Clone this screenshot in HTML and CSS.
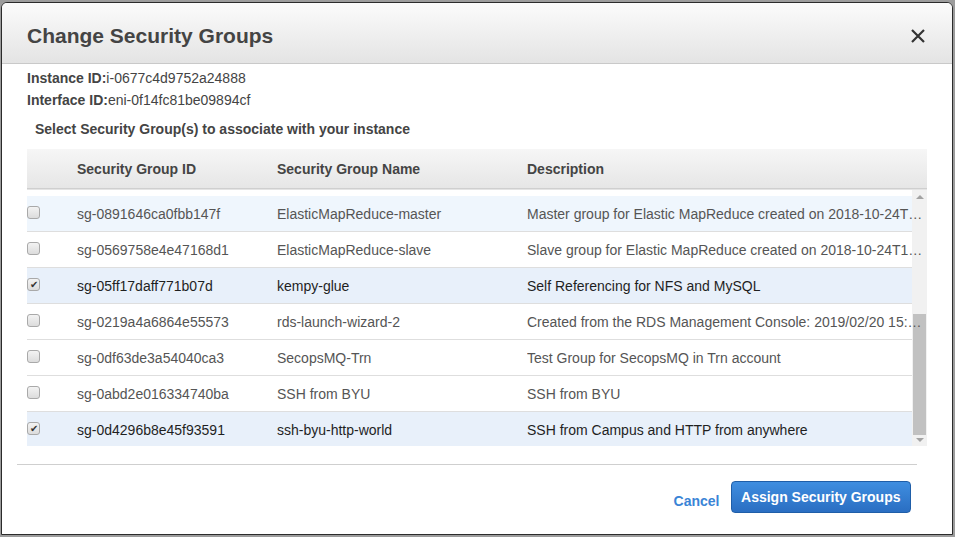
FILE: index.html
```html
<!DOCTYPE html>
<html lang="en">
<head>
<meta charset="utf-8">
<title>Change Security Groups</title>
<link rel="stylesheet" href="styles.css">
</head>
<body>
<div class="dialog">
  <div class="dlg-head">
    <h1 class="dlg-title">Change Security Groups</h1>
    <button class="close" aria-label="Close">
      <svg width="14" height="14" viewBox="0 0 14 14"><path d="M1 1 L13 13 M13 1 L1 13" stroke="#333" stroke-width="2.2" fill="none"/></svg>
    </button>
  </div>
  <div class="dlg-body">
    <div class="meta"><b>Instance ID:</b>i-0677c4d9752a24888</div>
    <div class="meta"><b>Interface ID:</b>eni-0f14fc81be09894cf</div>
    <div class="prompt">Select Security Group(s) to associate with your instance</div>
    <div class="grid">
      <div class="thead">
        <div></div>
        <div>Security Group ID</div>
        <div>Security Group Name</div>
        <div>Description</div>
      </div>
      <div class="tbody">
        <div class="row hover"><div><span class="cb"></span></div><div class="c">sg-0891646ca0fbb147f</div><div class="c">ElasticMapReduce-master</div><div class="c desc">Master group for Elastic MapReduce created on 2018-10-24T17:05:31.000Z</div></div>
        <div class="row"><div><span class="cb"></span></div><div class="c">sg-0569758e4e47168d1</div><div class="c">ElasticMapReduce-slave</div><div class="c desc">Slave group for Elastic MapReduce created on 2018-10-24T17:05:31.000Z</div></div>
        <div class="row sel"><div><span class="cb on">&#10004;</span></div><div class="c">sg-05ff17daff771b07d</div><div class="c">kempy-glue</div><div class="c desc">Self Referencing for NFS and MySQL</div></div>
        <div class="row"><div><span class="cb"></span></div><div class="c">sg-0219a4a6864e55573</div><div class="c">rds-launch-wizard-2</div><div class="c desc">Created from the RDS Management Console: 2019/02/20 15:45:12</div></div>
        <div class="row"><div><span class="cb"></span></div><div class="c">sg-0df63de3a54040ca3</div><div class="c">SecopsMQ-Trn</div><div class="c desc">Test Group for SecopsMQ in Trn account</div></div>
        <div class="row"><div><span class="cb"></span></div><div class="c">sg-0abd2e016334740ba</div><div class="c">SSH from BYU</div><div class="c desc">SSH from BYU</div></div>
        <div class="row sel"><div><span class="cb on">&#10004;</span></div><div class="c">sg-0d4296b8e45f93591</div><div class="c">ssh-byu-http-world</div><div class="c desc">SSH from Campus and HTTP from anywhere</div></div>
        <div class="scrollbar">
          <span class="arrow up"></span>
          <span class="thumb"></span>
          <span class="arrow down"></span>
        </div>
      </div>
    </div>
  </div>
  <div class="dlg-foot">
    <a class="cancel" href="#">Cancel</a>
    <button class="primary">Assign Security Groups</button>
  </div>
</div>
</body>
</html>
```
FILE: styles.css
```css
* { box-sizing: border-box; }
html, body { margin: 0; padding: 0; }
body {
  background: #9c9c9c;
  font-family: "Liberation Sans", Arial, sans-serif;
  font-size: 14px;
  color: #444;
  width: 955px;
  height: 537px;
  overflow: hidden;
}
.dialog {
  margin: 2px 0 0 1px;
  width: 952px;
  height: 533px;
  background: #fff;
  border: 1px solid #2b2b2b;
  border-radius: 6px 6px 0 0;
  overflow: hidden;
}
.dlg-head {
  height: 61px;
  display: flex;
  align-items: center;
  justify-content: space-between;
  padding: 0 27px 0 25px;
  background: linear-gradient(#fbfbfb, #e4e4e4);
  border-bottom: 1px solid #c9c9c9;
}
.dlg-title {
  margin: 0;
  font-size: 21px;
  font-weight: bold;
  color: #444;
  padding-top: 6px;
}
.close {
  border: 0;
  background: none;
  padding: 0;
  width: 14px;
  height: 14px;
  display: flex;
  margin-top: 6px;
}
.dlg-body {
  padding: 3px 0 0 25px;
}
.meta {
  line-height: 22px;
  color: #444;
}
.meta b { color: #444; }
.prompt {
  margin: 7px 0 0 8px;
  line-height: 22px;
  font-weight: bold;
  color: #444;
}
.grid {
  width: 900px;
  margin-top: 9px;
}
.thead {
  height: 40px;
  display: grid;
  grid-template-columns: 50px 200px 250px 1fr;
  align-items: center;
  background: linear-gradient(#f6f6f6, #e6e6e6);
  border-bottom: 1px solid #cfcfcf;
  font-weight: bold;
  color: #444;
}
.tbody {
  position: relative;
  height: 257px;
  padding-top: 6px;
  overflow: hidden;
  border-top: 1px solid #e4e4e4;
}
.row {
  height: 36px;
  display: grid;
  grid-template-columns: 50px 200px 250px 1fr;
  align-items: center;
  border-bottom: 1px solid #dedede;
  color: #555;
}
.row.hover { background: #eff6fd; }
.row.sel { background: #e8f0fa; color: #1f1f1f; }
.c {
  position: relative;
  z-index: 2;
  white-space: nowrap;
  overflow: hidden;
  text-overflow: ellipsis;
}
.desc { padding-right: 3px; }
.cb {
  display: block;
  width: 13px;
  height: 13px;
  margin-top: -3px;
  border: 1px solid #a9a9a9;
  border-radius: 3px;
  background: linear-gradient(#f3f3f3, #dcdcdc);
  font-size: 10px;
  line-height: 11px;
  text-align: center;
  color: #333;
}
.scrollbar {
  position: absolute;
  z-index: 1;
  top: 0;
  right: 0;
  bottom: 0;
  width: 15px;
  background: #f1f1f1;
  display: flex;
  flex-direction: column;
  align-items: center;
}
.arrow {
  width: 0;
  height: 0;
  border-left: 4px solid transparent;
  border-right: 4px solid transparent;
}
.arrow.up { border-bottom: 4px solid #a3a3a3; margin-top: 5px; }
.arrow.down { border-top: 4px solid #a3a3a3; margin-top: 3px; }
.thumb {
  width: 13px;
  height: 121px;
  margin-top: 115px;
  background: #c1c1c1;
}
.dlg-foot {
  margin: 18px 0 0 15px;
  width: 900px;
  border-top: 1px solid #cfcfcf;
  padding: 16px 6px 0 0;
  display: flex;
  justify-content: flex-end;
  align-items: center;
  gap: 11px;
}
.cancel {
  color: #3a84d6;
  font-weight: bold;
  text-decoration: none;
  margin-top: 7px;
}
.primary {
  height: 32px;
  padding: 0 9.5px;
  border: 1px solid #1f5ea8;
  border-radius: 4px;
  background: linear-gradient(#3f8ee0, #2a6ec2);
  color: #fff;
  font-family: "Liberation Sans", Arial, sans-serif;
  font-weight: bold;
  font-size: 14px;
}
```
